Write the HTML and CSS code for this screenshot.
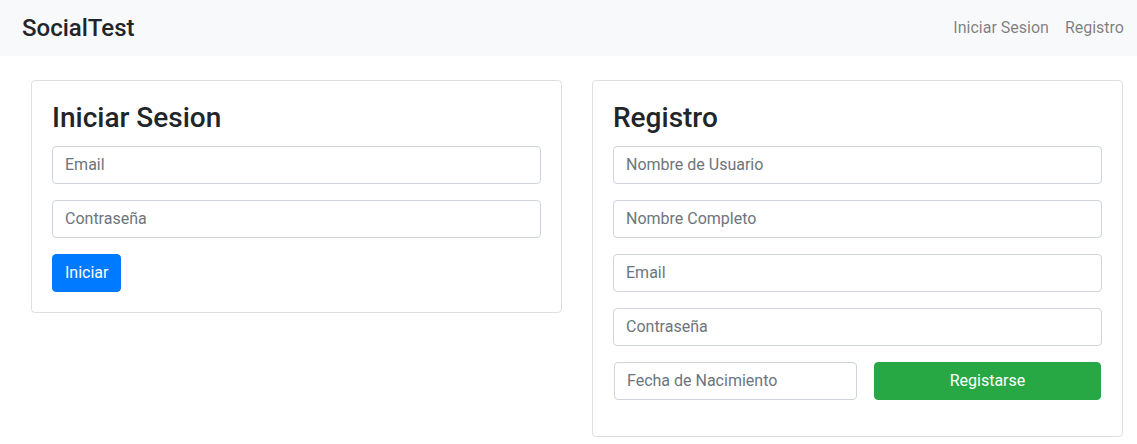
FILE: index.html
```html
<!DOCTYPE html>
<html lang="es">
<head>
<meta charset="utf-8">
<title>SocialTest</title>
<link rel="stylesheet" href="styles.css">
</head>
<body>
<nav class="navbar">
  <a class="brand" href="#">SocialTest</a>
  <ul class="nav-links">
    <li><a class="nav-link" href="#">Iniciar Sesion</a></li>
    <li><a class="nav-link" href="#">Registro</a></li>
  </ul>
</nav>
<main class="cards">
  <section class="card">
    <h3 class="card-title">Iniciar Sesion</h3>
    <form class="form">
      <div class="form-group"><input class="form-control" type="email" placeholder="Email"></div>
      <div class="form-group"><input class="form-control" type="password" placeholder="Contraseña"></div>
      <button class="btn btn-primary" type="button">Iniciar</button>
    </form>
  </section>
  <section class="card">
    <h3 class="card-title">Registro</h3>
    <form class="form">
      <div class="form-group"><input class="form-control" type="text" placeholder="Nombre de Usuario"></div>
      <div class="form-group"><input class="form-control" type="text" placeholder="Nombre Completo"></div>
      <div class="form-group"><input class="form-control" type="email" placeholder="Email"></div>
      <div class="form-group"><input class="form-control" type="password" placeholder="Contraseña"></div>
      <div class="form-group form-row">
        <input class="form-control date" type="text" placeholder="Fecha de Nacimiento">
        <button class="btn btn-success" type="button">Registarse</button>
      </div>
    </form>
  </section>
</main>
</body>
</html>
```
FILE: styles.css
```css
* { box-sizing: border-box; }
html, body { margin: 0; padding: 0; }
body {
  font-family: Roboto, "Liberation Sans", sans-serif;
  font-size: 16px;
  line-height: 1.5;
  color: #212529;
  background: #fff;
}
.navbar {
  height: 56px;
  background: #f8f9fa;
  display: flex;
  align-items: center;
  justify-content: space-between;
  padding: 0 5px 0 22px;
}
.brand {
  font-size: 24px;
  line-height: 30px;
  font-weight: 500;
  color: #212529;
  text-decoration: none;
}
.nav-links {
  list-style: none;
  margin: 0;
  padding: 0;
  display: flex;
}
.nav-link {
  display: block;
  padding: 8px;
  color: rgba(0, 0, 0, 0.5);
  text-decoration: none;
}
.cards {
  display: flex;
  align-items: flex-start;
  gap: 30px;
  padding: 24px 14px 0 31px;
}
.card {
  flex: 1 1 0;
  border: 1px solid rgba(0, 0, 0, 0.125);
  border-radius: 4px;
  padding: 20px;
}
.card-title {
  margin: 0 0 11px;
  font-size: 28px;
  line-height: 1.2;
  font-weight: 500;
}
.form { margin: 0; }
.form-group { margin-bottom: 16px; }
.form-control {
  display: block;
  width: 100%;
  height: 38px;
  padding: 6px 12px;
  font: inherit;
  font-size: 16px;
  line-height: 1.5;
  color: #495057;
  background: #fff;
  border: 1px solid #ced4da;
  border-radius: 4px;
}
.form-control::placeholder { color: #6c757d; opacity: 1; }
.btn {
  display: inline-block;
  height: 38px;
  padding: 6px 12px;
  font: inherit;
  font-size: 16px;
  line-height: 1.5;
  color: #fff;
  border: 1px solid transparent;
  border-radius: 4px;
  cursor: pointer;
}
.btn-primary { background: #007bff; border-color: #007bff; }
.btn-success { background: #28a745; border-color: #28a745; }
.form-row {
  display: flex;
  gap: 17px;
  padding-left: 1px;
}
.form-row .date { width: 243px; flex: none; }
.form-row .btn { width: 227px; flex: none; }
```
